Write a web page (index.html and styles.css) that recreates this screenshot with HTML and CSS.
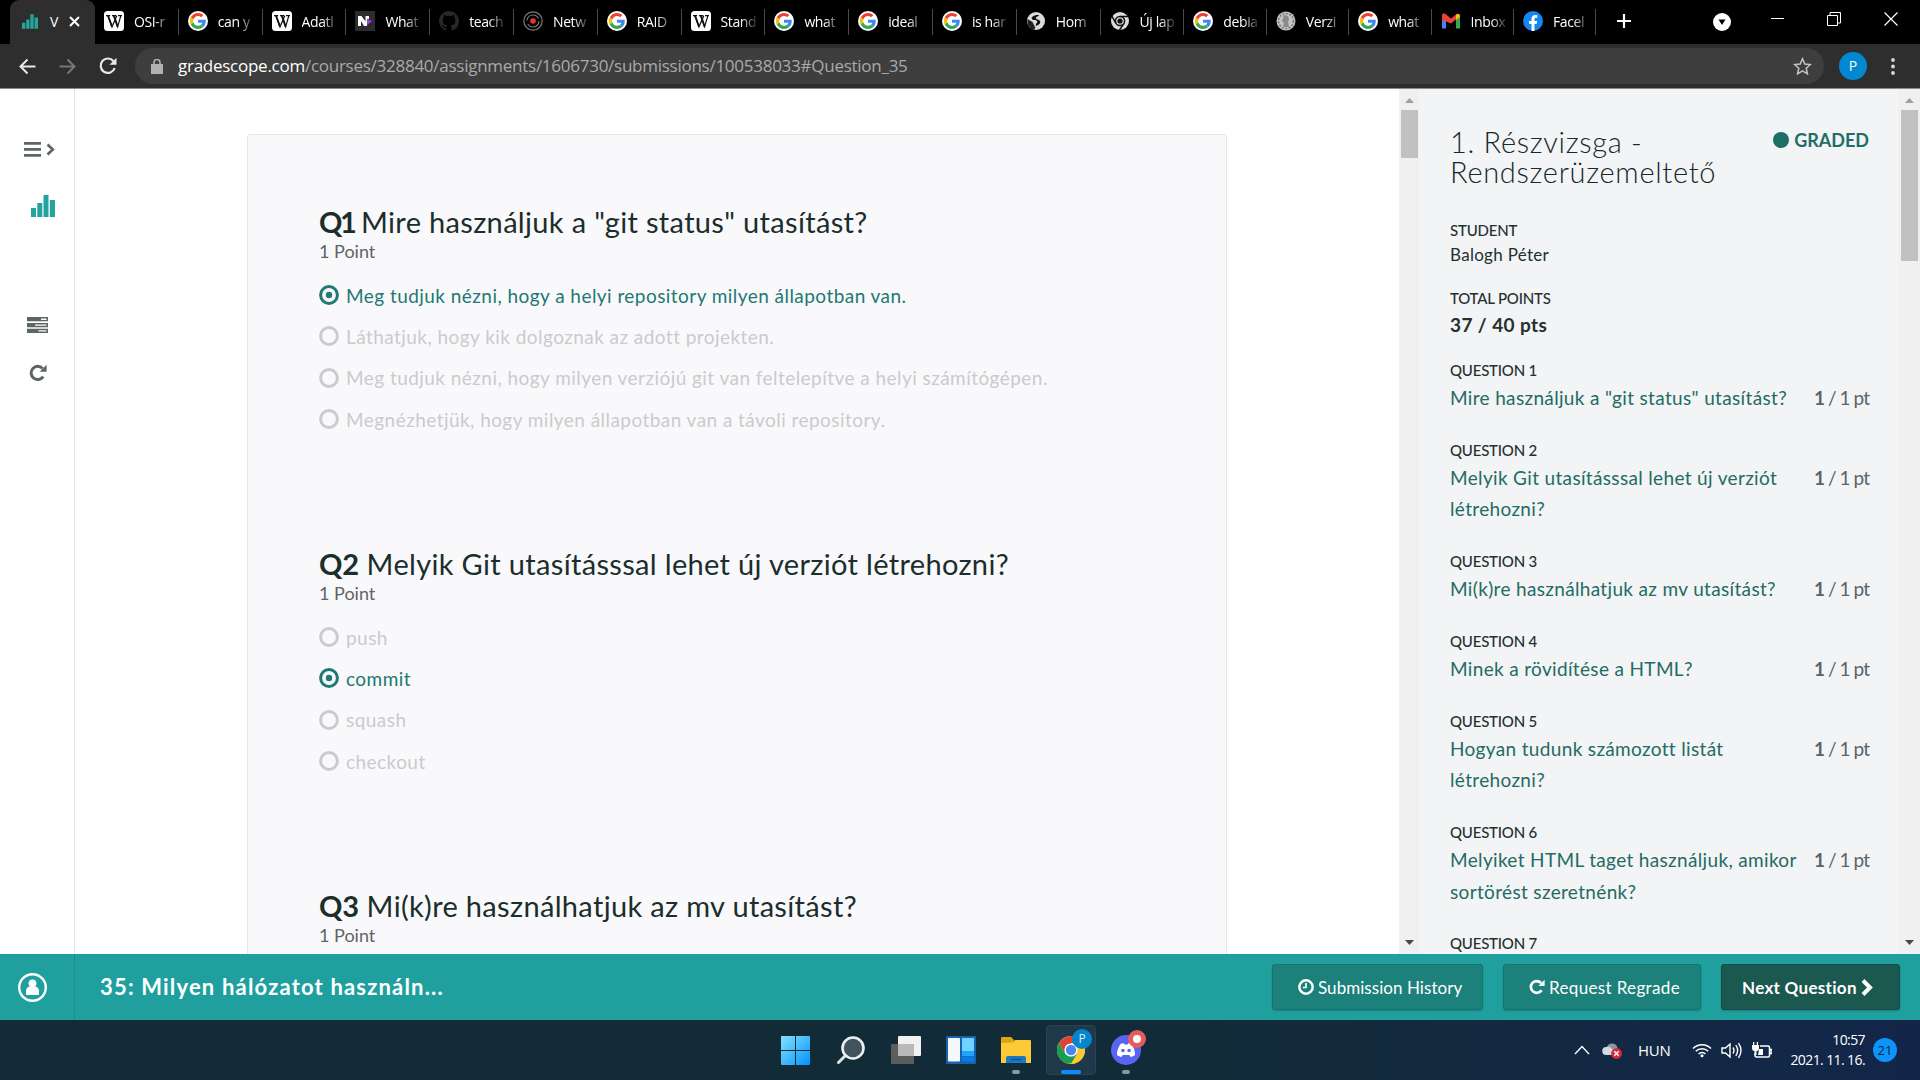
FILE: index.html
```
<!DOCTYPE html>
<html lang="hu">
<head>
<meta charset="utf-8">
<title>View Submission | Gradescope</title>
<link rel="stylesheet" href="styles.css">
</head>
<body>
<svg class="defs" width="0" height="0">
  <symbol id="google" viewBox="0 0 48 48"><circle cx="24" cy="24" r="24" fill="#fff"/><g transform="translate(4.5 4.5) scale(.81)"><path fill="#EA4335" d="M24 9.5c3.54 0 6.71 1.22 9.21 3.6l6.85-6.85C35.9 2.38 30.47 0 24 0 14.62 0 6.51 5.38 2.56 13.22l7.98 6.19C12.43 13.72 17.74 9.5 24 9.5z"/><path fill="#4285F4" d="M46.98 24.55c0-1.57-.15-3.09-.38-4.55H24v9.02h12.94c-.58 2.96-2.26 5.48-4.78 7.18l7.73 6c4.51-4.18 7.09-10.36 7.09-17.65z"/><path fill="#FBBC05" d="M10.53 28.59c-.48-1.45-.76-2.99-.76-4.59s.27-3.14.76-4.59l-7.98-6.19C.92 16.46 0 20.12 0 24c0 3.88.92 7.54 2.56 10.78l7.97-6.19z"/><path fill="#34A853" d="M24 48c6.48 0 11.93-2.13 15.89-5.81l-7.73-6c-2.15 1.45-4.92 2.3-8.16 2.3-6.26 0-11.57-4.22-13.47-9.91l-7.98 6.19C6.51 42.62 14.62 48 24 48z"/></g></symbol>
  <symbol id="wiki" viewBox="0 0 20 20"><rect width="20" height="20" rx="3.5" fill="#fff"/><path d="M2 4.6h4.2M8 4.600h4.200M14 4.600h4M4 4.600l4 11.200 4.800-11M9.800 4.600l3.800 11.200 3.200-11" fill="none" stroke="#111" stroke-width="1.200"/><path d="M4 4.600l4 11M9.900 4.600l3.700 11" stroke="#111" stroke-width="1.800"/></symbol>
  <symbol id="chart" viewBox="0 0 24 22"><path d="M0 13h5v9H0zM6.300 8h5v14h-5zM12.500 0h5v22h-5zM18.800 5H24v17h-5.200z"/></symbol>
  <symbol id="redo" viewBox="0 0 18 18"><path d="M14.200 12.600A6.600 6.600 0 1 1 13.600 4.500" fill="none" stroke="currentColor" stroke-width="3"/><path d="M17.600.8v7h-7z" fill="currentColor"/></symbol>
  <symbol id="up" viewBox="0 0 9 5"><path d="M0 5L4.500 0 9 5z"/></symbol>
  <symbol id="radio" viewBox="0 0 20 20"><circle cx="10" cy="10" r="8.400" fill="none" stroke="currentColor" stroke-width="3"/></symbol>
  <symbol id="radio-on" viewBox="0 0 20 20"><circle cx="10" cy="10" r="8.400" fill="none" stroke="currentColor" stroke-width="3"/><circle cx="10" cy="10" r="3.200" fill="currentColor"/></symbol>
</svg>

<header class="tabs">
  <div class="tab-active"><svg width="16" height="17"><use href="#chart"/></svg><span>V</span><svg class="close" width="11" height="11" viewBox="0 0 11 11"><path d="M1 1l9 9M10 1l-9 9" stroke="#fff" stroke-width="2"/></svg></div>
  <div class="tab"><svg><use href="#wiki"/></svg><span>OSI-r</span></div>
  <div class="tab"><svg><use href="#google"/></svg><span>can y</span></div>
  <div class="tab"><svg><use href="#wiki"/></svg><span>Adatl</span></div>
  <div class="tab"><svg viewBox="0 0 20 20"><rect width="20" height="20" fill="#2d2d2f"/><path d="M12 8l5 2-5 4z" fill="#a43cf0"/><path d="M3 15V5h3.500l4 5.500V5H14v3h-2v7H9L6 10v5z" fill="#fff"/></svg><span>What</span></div>
  <div class="tab"><svg viewBox="0 0 16 16"><path fill="#24292e" d="M8 0C3.580 0 0 3.580 0 8c0 3.540 2.290 6.530 5.470 7.590.4.070.55-.17.55-.38 0-.19-.010-.82-.010-1.490-2.010.37-2.530-.49-2.690-.94-.09-.23-.48-.94-.82-1.130-.28-.15-.68-.52-.010-.53.63-.010 1.080.58 1.230.82.72 1.210 1.870.87 2.330.66.070-.52.28-.87.51-1.070-1.780-.2-3.640-.89-3.640-3.950 0-.87.31-1.590.82-2.150-.08-.2-.36-1.020.08-2.120 0 0 .67-.21 2.200.82.64-.18 1.320-.27 2-.27s1.360.09 2 .27c1.530-1.040 2.200-.82 2.200-.82.44 1.100.16 1.920.08 2.120.51.56.82 1.270.82 2.150 0 3.070-1.870 3.750-3.650 3.950.29.25.54.73.54 1.480 0 1.070-.010 1.930-.010 2.200 0 .21.15.46.55.38A8.010 8.010 0 0 0 16 8c0-4.420-3.580-8-8-8z"/></svg><span>teach</span></div>
  <div class="tab"><svg viewBox="0 0 20 20" fill="none" stroke="#777" stroke-width="1.200"><circle cx="10" cy="10" r="9.200"/><circle cx="10" cy="10" r="6" stroke-dasharray="15 4"/><circle cx="10" cy="10" r="2.800" fill="#e8332a" stroke="none"/></svg><span>Netw</span></div>
  <div class="tab"><svg><use href="#google"/></svg><span>RAID</span></div>
  <div class="tab"><svg><use href="#wiki"/></svg><span>Stand</span></div>
  <div class="tab"><svg><use href="#google"/></svg><span>what</span></div>
  <div class="tab"><svg><use href="#google"/></svg><span>ideal</span></div>
  <div class="tab"><svg><use href="#google"/></svg><span>is har</span></div>
  <div class="tab"><svg viewBox="0 0 20 20"><circle cx="10" cy="10" r="9" fill="#dadce0"/><path d="M10 4c-3 1-5 2-4 4s4 0 5 2-2 2-1 5c3-1 5-3 4-5s-4-1-4-3 3-1 3-3z" fill="#111"/><path d="M1.500 8l5 3 3 6-2 2C3 17 1 13 1.500 8z" fill="#222"/></svg><span>Hom</span></div>
  <div class="tab"><svg viewBox="0 0 20 20"><circle cx="10" cy="10" r="9" fill="#dadce0"/><circle cx="10" cy="10" r="4.600" fill="#dadce0" stroke="#111" stroke-width="1.500"/><path d="M10 5.400h9M6 12.300L1.800 5.200M14 12.300L9.500 19" stroke="#111" stroke-width="1.500"/><circle cx="10" cy="10" r="2.600" fill="#111"/></svg><span>Új lap</span></div>
  <div class="tab tight"><svg><use href="#google"/></svg><span>debia</span></div>
  <div class="tab tight"><svg viewBox="0 0 20 20"><circle cx="10" cy="10" r="9.500" fill="#c4c4c4"/><circle cx="10" cy="10" r="7.500" fill="none" stroke="#777" stroke-width="1.500" stroke-dasharray="2 1.500"/><path d="M8 4c5 0 6 4 4 7l1 5H7l1-4-2-2z" fill="#8a8a8a"/></svg><span>Verzi</span></div>
  <div class="tab tight"><svg><use href="#google"/></svg><span>what</span></div>
  <div class="tab tight"><svg viewBox="0 0 20 20"><path d="M1 17.500V5h4v12.500z" fill="#4285f4"/><path d="M15 17.500V5h4v12.500z" fill="#34a853"/><path d="M1 9V4.500C1 2.500 3 2 4.500 3L10 7.500 15 3.500v5L10 12.500z" fill="#ea4335"/><path d="M15 9V3.500C16.500 2 19 2.500 19 5v1z" fill="#fbbc04"/></svg><span>Inbox</span></div>
  <div class="tab tight"><svg viewBox="0 0 20 20"><circle cx="10" cy="10" r="10" fill="#1686f0"/><path d="M8.500 20v-7H6v-3h2.500V8c0-2.600 1.500-4 3.800-4l2 .2v2.500H13c-1.200 0-1.500.7-1.500 1.500V10h2.700l-.5 3h-2.200v7z" fill="#fff"/></svg><span>Facel</span></div>
  <svg class="plus" viewBox="0 0 16 16"><path d="M8 1v14M1 8h14" stroke="#fff" stroke-width="2.200"/></svg>
  <div class="window-controls">
    <svg width="18" height="18" viewBox="0 0 18 18"><circle cx="9" cy="9" r="9" fill="#fff"/><path d="M5.500 6.500h7L9 12z" fill="#000"/></svg>
    <svg width="13" height="13" viewBox="0 0 13 13"><path d="M0 6.500h13" stroke="#fff"/></svg>
    <svg width="14" height="14" viewBox="0 0 14 14"><path d="M.500 3.500h10v10H.500zM3 3V.500h10.500V11H11" fill="none" stroke="#fff"/></svg>
    <svg width="14" height="14" viewBox="0 0 14 14"><path d="M.500.500l13 13M13.500.500l-13 13" stroke="#fff" stroke-width="1.200"/></svg>
  </div>
</header>

<nav class="toolbar">
  <svg width="17" height="17" viewBox="0 0 17 17"><path d="M16.500 8.500H2M8.500 1.500l-7 7 7 7" fill="none" stroke="#e8e8e8" stroke-width="2"/></svg>
  <svg width="17" height="17" viewBox="0 0 17 17"><path d="M.500 8.500H15M8.500 1.500l7 7-7 7" fill="none" stroke="#777" stroke-width="2"/></svg>
  <svg width="18" height="18" viewBox="0 0 18 18"><path d="M15.700 11A7.200 7.200 0 1 1 14.500 4.200" fill="none" stroke="#e8e8e8" stroke-width="2.200"/><path d="M17.500.8v7h-7z" fill="#e8e8e8"/></svg>
  <div class="address">
    <svg width="12" height="15" viewBox="0 0 12 15"><path d="M0 5h12v10H0z" fill="#b0b1b3"/><path d="M3 6V3.500a3 3 0 0 1 6 0V6" fill="none" stroke="#b0b1b3" stroke-width="1.600"/></svg>
    <p><b>gradescope.com</b>/courses/328840/assignments/1606730/submissions/100538033#Question_35</p>
    <svg width="19" height="18" viewBox="0 0 19 18"><path d="M9.500 1.800l2.300 5.200 5.600.5-4.200 3.700 1.200 5.600-4.900-3-4.900 3 1.200-5.600L1.600 7.500 7.200 7z" fill="none" stroke="#c4c4c4" stroke-width="1.500"/></svg>
  </div>
  <span class="profile">P</span>
  <svg class="menu" width="4" height="17" viewBox="0 0 4 17" fill="#d8d8d8"><circle cx="2" cy="2" r="1.900"/><circle cx="2" cy="8.500" r="1.900"/><circle cx="2" cy="15" r="1.900"/></svg>
</nav>

<main class="page">
  <aside class="rail">
    <svg width="31" height="15" viewBox="0 0 31 15"><path d="M0 0h17v2.700H0zM0 6h17v2.700H0zM0 12h17v2.700H0z" fill="#5c6664"/><path d="M23.500 2.500l5.300 5-5.300 5" fill="none" stroke="#5c6664" stroke-width="2.700"/></svg>
    <svg class="brand" width="24" height="22"><use href="#chart"/></svg>
    <svg class="rubric" width="21" height="16" viewBox="0 0 21 16"><path d="M0 0h21v4.300H0zM0 5.900h21v4.300H0zM0 11.700h21V16H0z" fill="#5c6664"/><path d="M14 1.500h5.500v1.400H14zM8 7.400h11.500v1.400H8zM11.500 13.200h8v1.400h-8z" fill="#fff"/></svg>
    <svg class="rerun" width="18" height="18"><use href="#redo"/></svg>
  </aside>
  <section class="viewer">
    <article class="doc">
      <section class="question">
        <h2><b class="first">Q1</b> Mire használjuk a "git status" utasítást?</h2>
        <p class="worth">1 Point</p>
        <ul>
          <li class="picked"><svg><use href="#radio-on"/></svg>Meg tudjuk nézni, hogy a helyi repository milyen állapotban van.</li>
          <li><svg><use href="#radio"/></svg>Láthatjuk, hogy kik dolgoznak az adott projekten.</li>
          <li><svg><use href="#radio"/></svg>Meg tudjuk nézni, hogy milyen verziójú git van feltelepítve a helyi számítógépen.</li>
          <li><svg><use href="#radio"/></svg>Megnézhetjük, hogy milyen állapotban van a távoli repository.</li>
        </ul>
      </section>
      <section class="question">
        <h2><b>Q2</b> Melyik Git utasításssal lehet új verziót létrehozni?</h2>
        <p class="worth">1 Point</p>
        <ul>
          <li><svg><use href="#radio"/></svg>push</li>
          <li class="picked"><svg><use href="#radio-on"/></svg>commit</li>
          <li><svg><use href="#radio"/></svg>squash</li>
          <li><svg><use href="#radio"/></svg>checkout</li>
        </ul>
      </section>
      <section class="question">
        <h2><b>Q3</b> Mi(k)re használhatjuk az mv utasítást?</h2>
        <p class="worth">1 Point</p>
      </section>
    </article>
  </section>
  <div class="scroll"><svg><use href="#up"/></svg><i class="thumb short"></i><svg class="down"><use href="#up"/></svg></div>
  <aside class="outline">
    <header><h1>1. Részvizsga - Rendszerüzemeltető</h1><p class="status"><i></i>GRADED</p></header>
    <h3>STUDENT</h3>
    <p class="student">Balogh Péter</p>
    <h3>TOTAL POINTS</h3>
    <p class="total">37 / 40 pts</p>
    <h3>QUESTION 1</h3>
    <div class="score"><a>Mire használjuk a "git status" utasítást?</a><span><b>1</b> / 1 pt</span></div>
    <h3>QUESTION 2</h3>
    <div class="score"><a>Melyik Git utasításssal lehet új verziót létrehozni?</a><span><b>1</b> / 1 pt</span></div>
    <h3>QUESTION 3</h3>
    <div class="score"><a>Mi(k)re használhatjuk az mv utasítást?</a><span><b>1</b> / 1 pt</span></div>
    <h3>QUESTION 4</h3>
    <div class="score"><a>Minek a rövidítése a HTML?</a><span><b>1</b> / 1 pt</span></div>
    <h3>QUESTION 5</h3>
    <div class="score"><a>Hogyan tudunk számozott listát<br>létrehozni?</a><span><b>1</b> / 1 pt</span></div>
    <h3>QUESTION 6</h3>
    <div class="score"><a>Melyiket HTML taget használjuk, amikor<br>sortörést szeretnénk?</a><span><b>1</b> / 1 pt</span></div>
    <h3>QUESTION 7</h3>
  </aside>
  <div class="scroll edge"><svg><use href="#up"/></svg><i class="thumb long"></i><svg class="down"><use href="#up"/></svg></div>
</main>

<footer class="actions">
  <div class="account"><svg width="29" height="29" viewBox="0 0 29 29"><circle cx="14.500" cy="14.500" r="13.300" fill="none" stroke="#fff" stroke-width="2.400"/><circle cx="14.500" cy="10.300" r="3.900" fill="#fff"/><path d="M8 21v-3c0-3 2-4.500 4-4.500 1.500 1 3.500 1 5 0 2 0 4 1.500 4 4.500v3c0 .8-.5 1-1 1H9c-.5 0-1-.2-1-1z" fill="#fff"/></svg></div>
  <h4>35: Milyen hálózatot használn...</h4>
  <button class="history"><svg width="16" height="16" viewBox="0 0 16 16"><path d="M8 4v4.500H4.800" fill="none" stroke="#fff" stroke-width="1.700"/><circle cx="8" cy="8" r="6.700" fill="none" stroke="#fff" stroke-width="2.500"/></svg>Submission History</button>
  <button class="regrade"><svg width="16" height="16"><use href="#redo"/></svg>Request Regrade</button>
  <button class="next">Next Question<svg width="12" height="17" viewBox="0 0 12 17"><path d="M2 1.500l7 7-7 7" fill="none" stroke="#fff" stroke-width="4"/></svg></button>
</footer>

<div class="taskbar">
  <div class="apps">
    <div class="app"><svg width="29" height="29" viewBox="0 0 29 29"><defs><linearGradient id="w" x2="1" y2="1"><stop stop-color="#86e0ff"/><stop offset="1" stop-color="#0094fb"/></linearGradient></defs><path d="M0 1q0-1 1-1h13v14H0zM15 0h13q1 0 1 1v13H15zM0 15h14v14H1q-1 0-1-1zM15 15h14v13q0 1-1 1H15z" fill="url(#w)"/></svg></div>
    <div class="app"><svg width="28" height="29" viewBox="0 0 28 29"><path d="M1.500 26.500l7-7" stroke="#dfe3e6" stroke-width="3" stroke-linecap="round"/><circle cx="16" cy="12" r="10.500" fill="#43535c" stroke="#eceff1" stroke-width="2.600"/></svg></div>
    <div class="app"><svg width="30" height="28" viewBox="0 0 30 28"><rect y="8" width="23" height="20" rx="1" fill="#5d5d5d"/><rect x="7" width="23" height="20" rx="1" fill="#f1f1f1"/><path d="M7 8h16v12H8q-1 0-1-1z" fill="#b9b9b9"/></svg></div>
    <div class="app"><svg width="30" height="28" viewBox="0 0 30 28"><rect width="30" height="28" rx="1" fill="#1663b0"/><rect x="2" y="2" width="12" height="23.500" rx="1" fill="#f5f8fb"/><path d="M16 2h12v13H16z" fill="#6fd2ff"/><path d="M16 15h12v5H16z" fill="#21a5fb"/><path d="M16 20.500h12v5H16z" fill="#087be4"/></svg></div>
    <div class="app"><svg width="30" height="28" viewBox="0 0 30 28"><path d="M0 2q0-1 1-1h9l3 3v5H0z" fill="#dea316"/><path d="M0 7l12-.5L14 4h15q1 0 1 1v22H0z" fill="#fcc937"/><path d="M5 27v-5q0-2 2-2h16q2 0 2 2v5z" fill="#1d79bd"/><path d="M10 23.500h11" stroke="#0d5690" stroke-width="1.500"/></svg><i class="running"></i></div>
    <div class="app focused"><svg width="28" height="28" viewBox="0 0 28 28"><circle cx="14" cy="14" r="14" fill="#fcc934"/><path d="M14 14L7.900 17.500 1.900 7A14 14 0 0 1 26.100 7H14z" fill="#dc4437"/><path d="M1.900 7l6.100 10.500L14 21l-1.500 7A14 14 0 0 1 1.900 7z" fill="#1a9c54"/><path d="M7.900 17.500L14 28l6.500-10.500z" fill="#1a9c54"/><path d="M20.100 17.500L14 28A14 14 0 0 0 26.100 7H14z" fill="#fcc934"/><circle cx="14" cy="14" r="6.600" fill="#fff"/><circle cx="14" cy="14" r="5.200" fill="#4688f4"/></svg><span class="chip">P</span><i class="running"></i></div>
    <div class="app"><svg width="30" height="30" viewBox="0 0 30 30"><circle cx="15" cy="15" r="15" fill="#5865f2"/><path d="M9.500 9l3-1 .8 1.500h3.400L17.500 8l3 1c2.300 3.500 3.700 7 3.500 11-1.500 1.200-3 1.800-4.500 2l-1.200-2h-6.600l-1.200 2C9 21.800 7.500 21.200 6 20c-.2-4 1.200-7.500 3.500-11z" fill="#fff"/><circle cx="11.900" cy="15.500" r="1.800" fill="#5865f2"/><circle cx="18.100" cy="15.500" r="1.800" fill="#5865f2"/></svg><span class="chip alert"></span><i class="running"></i></div>
  </div>
  <div class="tray">
    <svg width="16" height="10" viewBox="0 0 16 10"><path d="M1 9l7-7.500L15 9" fill="none" stroke="#fff" stroke-width="1.400"/></svg>
    <svg class="cloud" width="20" height="17" viewBox="0 0 20 17"><path d="M5 5a5.500 5.500 0 0 1 10.500 1L11 10z" fill="#8d95a1"/><path d="M4 13a4 4 0 0 1 .5-8c3-1 5 1 6.500 3l4-2 2 3v4z" fill="#d5dae2"/><circle cx="14.500" cy="11.500" r="5.400" fill="#d92c37"/><path d="M12.300 9.300l4.400 4.400m0-4.400l-4.400 4.400" stroke="#fff" stroke-width="1.400"/></svg>
    <span class="lang">HUN</span>
    <svg class="wifi" width="20" height="16" viewBox="0 0 20 16" fill="none" stroke="#fff" stroke-width="1.500"><path d="M1 6.500a12.500 12.500 0 0 1 18 0M3.800 9.300a8.600 8.600 0 0 1 12.400 0M6.600 12a4.800 4.800 0 0 1 6.800 0"/><circle cx="10" cy="13.800" r="1.500" fill="#fff" stroke="none"/></svg>
    <svg class="sound" width="21" height="17" viewBox="0 0 21 17" fill="none" stroke="#fff" stroke-width="1.400"><path d="M1 6h3.500L9 2v13l-4.500-4H1zM12 5.500q2 3 0 6M14.800 3.200q3.700 5.300 0 10.600M17.500 1.200q5 7.300 0 14.600"/></svg>
    <svg class="battery" width="20" height="17" viewBox="0 0 20 17"><path d="M8 4h8q1.500 0 1.500 1.500v8q0 1.500-1.500 1.500H4.500Q3 15 3 13.500V11M18 7.500h2v4h-2z" fill="none" stroke="#fff" stroke-width="1.500"/><path d="M0 3h7v3q0 3-2.500 3v4h-2V9Q0 9 0 6zM1 0h1.300v3H1zM4.700 0H6v3H4.700zM7 7h4v6H6z" fill="#fff"/></svg>
    <p class="clock">10:57<br>2021. 11. 16.</p>
    <span class="count">21</span>
  </div>
</div>
</body>
</html>
```
FILE: styles.css
```
* { box-sizing: border-box; margin: 0; padding: 0; }
body { width: 1920px; height: 1080px; overflow: hidden; display: flex; flex-direction: column; background: #fff; font-family: Lato, "Liberation Sans", sans-serif; }
.defs { position: absolute; }
svg { flex: none; display: block; }
ul { list-style: none; }

/* browser tab strip */
.tabs { height: 44px; flex: none; display: flex; align-items: center; background: #000; padding-left: 10px; font-family: "Open Sans", sans-serif; font-size: 14px; letter-spacing: -.4px; color: #fff; }
.tab-active { width: 85px; height: 44px; background: #2e2e2e; border-radius: 9px 9px 0 0; display: flex; align-items: center; padding: 0 15px 2px 12px; }
.tab-active svg { fill: #26a69a; }
.tab-active span { margin-left: 12px; }
.tab-active .close { margin-left: auto; }
.tab { width: 83.8px; height: 26px; flex: none; display: flex; align-items: center; padding: 0 0 2px 9px; border-right: 1px solid #4a4a4a; }
.tab.tight { width: 82.4px; }
.tab svg { width: 20px; height: 20px; }
.tab span { margin-left: 10px; width: 36px; white-space: nowrap; -webkit-mask-image: linear-gradient(90deg, #000 55%, #0003 95%); mask-image: linear-gradient(90deg, #000 55%, #0003 95%); }
.plus { width: 16px; height: 16px; margin: 0 0 2px 20px; }
.window-controls { margin-left: auto; display: flex; align-items: center; padding-right: 22px; }
.window-controls svg { margin-left: 43px; margin-bottom: 7px; }
.window-controls svg:first-child { margin: 0 -3px 1px 0; }

.toolbar { height: 44px; flex: none; display: flex; align-items: center; background: #2e2e2e; padding: 0 25px 0 19px; font-family: "Open Sans", sans-serif; }
.toolbar > svg + svg { margin-left: 23px; }
.address { flex: none; width: 1689px; height: 36px; margin-left: 18px; border-radius: 18px; background: #3e3e3e; display: flex; align-items: center; padding: 0 12px 0 16px; font-size: 17px; color: #aaa; letter-spacing: -.26px; }
.address p { margin: 0 auto 1px 15px; white-space: nowrap; }
.address b { font-weight: 400; color: #fff; }
.profile { width: 28px; height: 28px; margin-left: 15px; border-radius: 50%; background: #0288d1; color: #fff; font-size: 14px; line-height: 28px; text-align: center; }
.toolbar .menu { margin-left: auto; }

.page { height: 866px; flex: none; display: flex; overflow: hidden; border-top: 1px solid #8a8a8a; }
.rail { width: 75px; border-right: 1px solid #e2e4e6; padding: 53px 0 0 24px; color: #5c6664; }
.brand { margin: 38px 0 0 7px; fill: #22a3a0; }
.rubric { margin: 100px 0 0 3px; }
.rerun { margin: 31px 0 0 5px; }

.viewer { flex: 1; padding: 45px 172px 0; }
.doc { height: 900px; border: 1px solid #e3e5e8; border-radius: 3px; background: #f9f9fb; padding: 68.500px 71px 0; color: #1b2e2c; }
.question { height: 342px; }
.question h2 { font-size: 29px; line-height: 35px; font-weight: 400; letter-spacing: .33px; white-space: nowrap; }
.question h2 b { letter-spacing: -.2px; }
.question h2 .first { letter-spacing: -2.500px; margin-right: -1px; }
.worth { font-size: 18px; line-height: 24px; color: #5d6467; margin-bottom: 12px; }
.question li { height: 41.3px; display: flex; align-items: center; gap: 7px; font-size: 19px; letter-spacing: .45px; color: #c9cbcd; white-space: nowrap; }
.question li svg { width: 20px; height: 20px; }
.question .picked { color: #217874; }

.scroll { width: 20px; flex: none; display: flex; flex-direction: column; align-items: center; background: #f0f0f0; padding: 9px 0; fill: #a0a0a0; }
.scroll svg { width: 9px; height: 5px; }
.scroll.edge { width: 22px; }
.scroll .down { margin-top: auto; transform: rotate(180deg); fill: #484848; }
.thumb { width: 17px; margin-top: 7px; background: #c1c1c1; }
.short { height: 48px; }
.long { height: 151px; }

.outline { width: 479px; flex: none; background: #f2f4f5; padding: 37px 29px 0 31px; color: #24302f; }
.outline header { display: flex; justify-content: space-between; height: 94px; }
.outline h1 { width: 300px; padding-top: 1px; font-size: 29px; line-height: 30px; font-weight: 300; letter-spacing: .7px; color: #16282a; }
.status { display: flex; align-items: center; gap: 5px; height: 27px; font-size: 18px; font-weight: 700; color: #1d6e66; }
.status i { width: 16px; height: 16px; border-radius: 50%; background: #1d6e66; }
.outline h3 { font-size: 15px; line-height: 20px; font-weight: 500; letter-spacing: -.2px; }
.student { margin: 3px 0 21px; font-size: 17px; line-height: 24px; letter-spacing: .3px; }
.total { margin: 3px 0 21px; font-size: 19px; line-height: 28px; font-weight: 700; letter-spacing: .4px; }
.score { display: flex; justify-content: space-between; margin: 2px 0 26.2px; font-size: 19px; line-height: 31.6px; letter-spacing: .34px; color: #246b63; white-space: nowrap; }
.score a { width: 350px; white-space: normal; }
.score span { color: #5c6367; letter-spacing: -.95px; }

.actions { height: 66px; flex: none; display: flex; align-items: center; background: #1fa09f; padding-right: 20px; color: #fff; }
.account { width: 75px; height: 66px; border-right: 1px solid #1a8f8d; display: flex; align-items: center; padding-left: 18px; }
.actions h4 { margin: 0 auto 0 25px; font-size: 22px; letter-spacing: 1.18px; line-height: 65px; height: 66px; }
.actions button { height: 46px; border: 1px solid #17736c; border-radius: 3px; background: #1c807b; box-shadow: 0 1px 2px #0003; color: #fff; font: 400 17px Lato, sans-serif; display: flex; align-items: center; white-space: nowrap; gap: 4px; }
.actions .history { width: 211px; padding-left: 25px; letter-spacing: .05px; }
.actions .regrade { width: 198px; padding-left: 25px; margin: 0 20px; letter-spacing: .35px; }
.actions .next { width: 179px; padding-left: 20px; background: #1b584f; border-color: #174c44; font-weight: 700; letter-spacing: .3px; }

.taskbar { flex: 1; display: flex; justify-content: space-between; background: linear-gradient(90deg, #122b36, #122b38 62%, #13264a 100%); padding: 0 23px 0 768px; font-family: "Open Sans", sans-serif; color: #fff; }
.apps { display: flex; align-items: center; }
.app { width: 55px; height: 60px; display: grid; place-items: center; position: relative; }
.app > svg { position: relative; z-index: 1; }
.app.focused::before { content: ""; position: absolute; inset: 5px 2.500px; border-radius: 4px; background: #20394a; border: 1px solid #2a4252; }
.running { position: absolute; bottom: 6px; left: 50%; margin-left: -4px; width: 8px; height: 4px; border-radius: 2px; background: #8d979d; }
.focused .running { width: 20px; margin-left: -10px; background: #0c8efa; }
.chip { position: absolute; z-index: 2; left: 29px; top: 9px; width: 20px; height: 20px; border-radius: 50%; background: #0585cb; font-size: 12px; line-height: 20px; text-align: center; color: #d7ecf8; }
.chip.alert { width: 18px; height: 18px; top: 10px; left: 30px; background: #fff; border: 5px solid #e95a5e; }
.tray { display: flex; align-items: center; }
.cloud { margin-left: 12px; }
.lang { margin-left: 16px; width: 32px; font-size: 15px; letter-spacing: -.2px; }
.wifi { margin-left: 22px; }
.sound { margin-left: 9px; }
.battery { margin-left: 10px; }
.clock { width: 93px; text-align: right; font-size: 14px; line-height: 20px; letter-spacing: -.6px; padding-bottom: 1px; }
.count { width: 24px; height: 24px; margin-left: 8px; border-radius: 50%; background: #0c94fb; color: #0d2744; font-size: 13px; line-height: 24px; text-align: center; }
```
